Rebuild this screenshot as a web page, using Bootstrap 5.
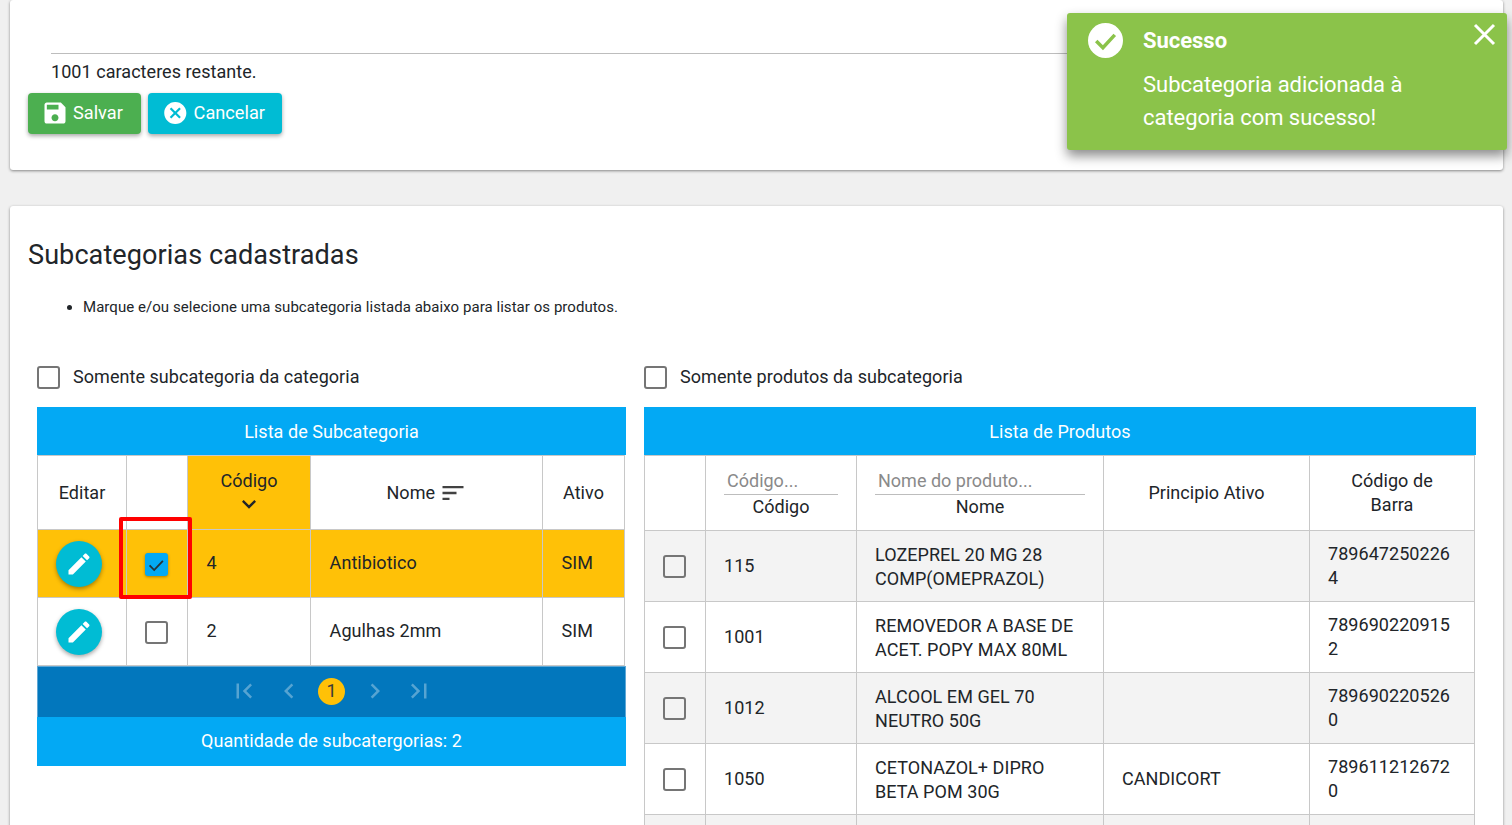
<!DOCTYPE html>
<html lang="pt-BR">
<head>
<meta charset="utf-8">
<title>Subcategorias</title>
<link href="https://cdn.jsdelivr.net/npm/bootstrap@5.3.0/dist/css/bootstrap.min.css" rel="stylesheet">
<style>
html,body{height:825px;overflow:hidden}
body{background:#f0f0f0;font-family:Roboto,"Liberation Sans",sans-serif;font-size:18px;color:#212529;line-height:24px;letter-spacing:.05px}
.sheet{background:#fff;margin:0 9px 0 10px;border-radius:3px;box-shadow:0 1px 3px rgba(0,0,0,.45)}
.sheet-top{height:170px;padding:53px 18px 0 18px;margin-bottom:36px}
.rule-line{margin-left:23px;border-top:1px solid #bdbdbd;padding-top:6px;height:40px}
.act-btn{height:41px;border:0;border-radius:4px;color:#fff;font-size:18.2px;letter-spacing:0;padding:0 17px 2px;display:flex;align-items:center;gap:4px;box-shadow:0 2px 4px rgba(0,0,0,.35)}
.act-save{background:#4caf50;width:113px;padding-left:13px}
.act-cancel{background:#00bcd4;width:134px;padding-left:14px}
.act-cancel svg{margin-right:1px}
.btn-row{display:flex;gap:7px}
.sheet-main{padding:33px 18px 0;height:700px}
.main-title{font-size:27.1px;font-weight:400;line-height:32px;margin:0}
.hint-list{font-size:15px;margin:26px 0 0;padding-left:55px;line-height:20px}
.panels{display:flex;gap:18px;margin:48px 0 0 9px;width:1439px;align-items:flex-start}
.panel-left{width:589px;position:relative}
.panel-right{width:832px}
.chk-line{display:flex;align-items:center;gap:13px;height:24px;margin-bottom:18px}
.form-check-input.box{width:23px;height:23px;margin:0;border:2px solid #757575;border-radius:3px;background-color:transparent;flex:none;display:block;box-shadow:none}
.form-check-input.box:checked{border:0;background-color:#03a9f4;background-size:22px;background-image:url("data:image/svg+xml,%3csvg xmlns='http://www.w3.org/2000/svg' viewBox='0 0 24 24'%3e%3cpath fill='none' stroke='%23263238' stroke-width='2' d='M5 12.5l5 5 9.5-10'/%3e%3c/svg%3e");box-shadow:0 1px 3px rgba(0,0,0,.35)}
.panel-head{background:#03a9f4;color:#fff;height:48px;padding-top:2px;display:flex;align-items:center;justify-content:center}
.data-tbl{table-layout:fixed;border-collapse:collapse;margin:0;background:#fff;--bs-table-bg:transparent;color:#212529}
.data-tbl th,.data-tbl td{border:1px solid #c8c8c8;padding:0 18px;vertical-align:middle;font-weight:400;line-height:24px}
.data-tbl th{text-align:center;padding:0 20px}
.data-tbl td.mid,.data-tbl th.mid{text-align:center;padding:0}
.tbl-l{width:587px}
.tbl-l thead tr{height:74px}
.tbl-l tbody tr{height:68px}
.tbl-l tbody td:not(.mid){padding:0 18px 2px 18.6px}
.data-tbl th.name-head{padding-left:20px}
.tbl-l td.fab-cell{padding-right:6px}
.tbl-l td.chk-cell{padding:2px 2px 0 0}
.tbl-r{width:830px}
.tbl-r thead tr{height:75px}
.tbl-r tbody tr{height:71px}
.tbl-r tbody tr:nth-child(odd) td{background:#f3f3f3}
.tbl-r td.mid{padding-right:2px}
.tbl-r tbody td:nth-child(3){padding-top:2px}
.data-tbl th.filter-cell{padding:0 18px}
.sorted,.row-on td{background:#ffc107!important}
.edit-fab{width:46px;height:46px;border-radius:50%;background:#00bcd4;border:0;padding:0;display:inline-flex;align-items:center;justify-content:center;box-shadow:0 2px 4px rgba(0,0,0,.35)}
.filter-in{border:0;border-bottom:1px solid #bdbdbd;width:100%;height:28px;display:block;font-size:18px;padding:0 3px;background:transparent;margin:0;outline:0}
.filter-in::placeholder{color:#8a8a8a;opacity:1}
.sort-down{display:block;margin:-3px auto -1px}
.sort-lines{vertical-align:-8px;margin-left:-1px}
.pager-bar{background:#0277bd;height:51px;padding-bottom:2px;display:flex;align-items:center;justify-content:center;gap:14.5px;border:1px solid #5fa8d6;border-width:1px 1px 0}
.pager-bar svg{opacity:.33}
.pager-now{width:27px;height:27px;border-radius:50%;background:#ffc107;color:#3a3a3a;display:flex;align-items:center;justify-content:center;font-size:18px}
.panel-foot{background:#03a9f4;color:#fff;height:49px;padding-bottom:2px;display:flex;align-items:center;justify-content:center}
.red-mark{position:absolute;left:82px;top:152px;width:73px;height:82px;border:4px solid #f00;border-radius:2px;pointer-events:none}
.toast-box{position:absolute;left:1067px;top:13px;width:440px;height:137px;background:#8bc34a;color:#fff;border-radius:3px;box-shadow:0 6px 12px rgba(0,0,0,.45);display:flex;padding:10px 0 0 21px;font-size:22px;line-height:33px;letter-spacing:-.03px}
.toast-title{font-weight:700;line-height:35px;margin-bottom:10px;font-size:22px}
.toast-text{margin-left:20px;width:290px}
.toast-x{position:absolute;right:10px;top:9px;width:25px;height:25px;padding:0;border:0;background:transparent;line-height:0}
</style>
</head>
<body>
<div class="sheet sheet-top">
  <div class="rule-line">1001 caracteres restante.</div>
  <div class="btn-row">
    <button class="act-btn act-save" type="button"><svg width="28" height="28" viewBox="0 0 24 24" fill="#fff"><path d="M17 3H5c-1.11 0-2 .9-2 2v14c0 1.1.89 2 2 2h14c1.1 0 2-.9 2-2V7l-4-4zm-5 16c-1.66 0-3-1.34-3-3s1.34-3 3-3 3 1.34 3 3-1.34 3-3 3zm3-10H5V5h10v4z"/></svg>Salvar</button>
    <button class="act-btn act-cancel" type="button"><svg width="28" height="28" viewBox="0 0 24 24" fill="#fff"><path d="M12 2C6.47 2 2 6.47 2 12s4.47 10 10 10 10-4.47 10-10S17.53 2 12 2zm5 13.59L15.59 17 12 13.41 8.41 17 7 15.59 10.59 12 7 8.41 8.41 7 12 10.59 15.59 7 17 8.41 13.41 12 17 15.59z"/></svg>Cancelar</button>
  </div>
</div>

<div class="sheet sheet-main">
  <h4 class="main-title">Subcategorias cadastradas</h4>
  <ul class="hint-list"><li>Marque e/ou selecione uma subcategoria listada abaixo para listar os produtos.</li></ul>
  <div class="panels">
    <div class="panel-left">
      <label class="chk-line"><input class="form-check-input box" type="checkbox">Somente subcategoria da categoria</label>
      <div class="panel-head">Lista de Subcategoria</div>
      <table class="table data-tbl tbl-l">
        <colgroup><col style="width:89px"><col style="width:61px"><col style="width:123px"><col style="width:232px"><col style="width:82px"></colgroup>
        <thead><tr>
          <th class="mid">Editar</th><th class="mid"></th>
          <th class="sorted">Código<svg class="sort-down" width="28" height="28" viewBox="0 0 24 24" fill="#212529"><path d="M16.59 8.59L12 13.17 7.41 8.59 6 10l6 6 6-6z"/></svg></th>
          <th class="name-head">Nome <svg class="sort-lines" width="28" height="28" viewBox="0 0 24 24" fill="#424242"><path d="M3 18h6v-2H3v2zM3 6v2h18V6H3zm0 7h12v-2H3v2z"/></svg></th>
          <th class="mid">Ativo</th>
        </tr></thead>
        <tbody>
          <tr class="row-on">
            <td class="mid fab-cell"><button class="edit-fab" type="button"><svg width="28" height="28" viewBox="0 0 24 24" fill="#fff"><path d="M3 17.25V21h3.75L17.81 9.94l-3.75-3.75L3 17.25zM20.71 7.04c.39-.39.39-1.02 0-1.41l-2.34-2.34c-.39-.39-1.02-.39-1.41 0l-1.83 1.83 3.75 3.75 1.83-1.83z"/></svg></button></td>
            <td class="mid chk-cell"><input class="form-check-input box mx-auto" type="checkbox" checked></td>
            <td>4</td><td>Antibiotico</td><td>SIM</td>
          </tr>
          <tr>
            <td class="mid fab-cell"><button class="edit-fab" type="button"><svg width="28" height="28" viewBox="0 0 24 24" fill="#fff"><path d="M3 17.25V21h3.75L17.81 9.94l-3.75-3.75L3 17.25zM20.71 7.04c.39-.39.39-1.02 0-1.41l-2.34-2.34c-.39-.39-1.02-.39-1.41 0l-1.83 1.83 3.75 3.75 1.83-1.83z"/></svg></button></td>
            <td class="mid chk-cell"><input class="form-check-input box mx-auto" type="checkbox"></td>
            <td>2</td><td>Agulhas 2mm</td><td>SIM</td>
          </tr>
        </tbody>
      </table>
      <div class="pager-bar">
        <svg width="30" height="30" viewBox="0 0 24 24" fill="#fff"><path d="M18.41 16.59L13.82 12l4.59-4.59L17 6l-6 6 6 6zM6 6h2v12H6z"/></svg>
        <svg width="30" height="30" viewBox="0 0 24 24" fill="#fff"><path d="M15.41 7.41L14 6l-6 6 6 6 1.41-1.41L10.83 12z"/></svg>
        <span class="pager-now">1</span>
        <svg width="30" height="30" viewBox="0 0 24 24" fill="#fff"><path d="M10 6L8.59 7.41 13.17 12l-4.58 4.59L10 18l6-6z"/></svg>
        <svg width="30" height="30" viewBox="0 0 24 24" fill="#fff"><path d="M5.59 7.41L10.18 12l-4.59 4.59L7 18l6-6-6-6zM16 6h2v12h-2z"/></svg>
      </div>
      <div class="panel-foot">Quantidade de subcatergorias: 2</div>
      <div class="red-mark"></div>
    </div>
    <div class="panel-right">
      <label class="chk-line"><input class="form-check-input box" type="checkbox">Somente produtos da subcategoria</label>
      <div class="panel-head">Lista de Produtos</div>
      <table class="table data-tbl tbl-r">
        <colgroup><col style="width:61px"><col style="width:151px"><col style="width:247px"><col style="width:206px"><col style="width:165px"></colgroup>
        <thead><tr>
          <th class="mid"></th>
          <th class="filter-cell"><input class="filter-in" placeholder="Código..." aria-label="Código">Código</th>
          <th class="filter-cell"><input class="filter-in" placeholder="Nome do produto..." aria-label="Nome">Nome</th>
          <th>Principio Ativo</th>
          <th>Código de Barra</th>
        </tr></thead>
        <tbody>
          <tr><td class="mid"><input class="form-check-input box mx-auto" type="checkbox"></td><td>115</td><td>LOZEPREL 20 MG 28 COMP(OMEPRAZOL)</td><td></td><td style="word-break:break-all">7896472502264</td></tr>
          <tr><td class="mid"><input class="form-check-input box mx-auto" type="checkbox"></td><td>1001</td><td>REMOVEDOR A BASE DE ACET. POPY MAX 80ML</td><td></td><td style="word-break:break-all">7896902209152</td></tr>
          <tr><td class="mid"><input class="form-check-input box mx-auto" type="checkbox"></td><td>1012</td><td>ALCOOL EM GEL 70 NEUTRO 50G</td><td></td><td style="word-break:break-all">7896902205260</td></tr>
          <tr><td class="mid"><input class="form-check-input box mx-auto" type="checkbox"></td><td>1050</td><td>CETONAZOL+ DIPRO BETA POM 30G</td><td>CANDICORT</td><td style="word-break:break-all">7896112126720</td></tr>
          <tr><td class="mid"></td><td></td><td></td><td></td><td></td></tr>
        </tbody>
      </table>
    </div>
  </div>
</div>

<div class="toast-box" role="alert">
  <svg width="35" height="35" viewBox="0 0 34 34" style="flex:none"><circle cx="17" cy="17" r="17" fill="#fff"/><path d="M8 17.5l6.5 6.5L26 11.5" fill="none" stroke="#8bc34a" stroke-width="3.4"/></svg>
  <div class="toast-text"><div class="toast-title">Sucesso</div>Subcategoria adicionada à categoria com sucesso!</div>
  <button class="toast-x" type="button" aria-label="Fechar"><svg width="25" height="25" viewBox="0 0 25 25"><path d="M3 3l19 19M22 3L3 22" stroke="#fff" stroke-width="3" fill="none"/></svg></button>
</div>
<script src="https://cdn.jsdelivr.net/npm/bootstrap@5.3.0/dist/js/bootstrap.bundle.min.js"></script>
</body>
</html>
